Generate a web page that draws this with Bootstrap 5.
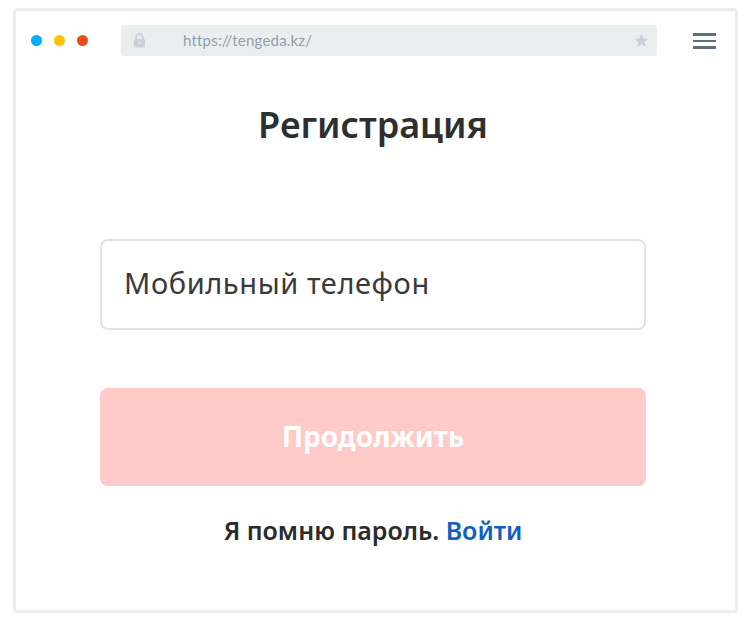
<!DOCTYPE html>
<html lang="ru">
<head>
<meta charset="utf-8">
<title>Регистрация</title>
<link href="https://cdn.jsdelivr.net/npm/bootstrap@5.3.0/dist/css/bootstrap.min.css" rel="stylesheet">
<style>
html,body{height:100%;background:#fff;font-family:"Noto Sans","Open Sans",sans-serif;}
.stage{padding:8px 13px 12px 13px;width:751px;height:625px;}
.frame{height:605px;width:725px;border:3px solid #ebeef0;border-radius:4px;background:#fff;}
.topbar{padding:14px 0 0 15px;height:45px;}
.dots{width:75px;gap:12px;height:31px;flex:none;}
.dot{width:11px;height:11px;border-radius:50%;}
.dot-a{background:#00aeff;}
.dot-b{background:#ffc107;}
.dot-c{background:#e84c1c;}
.addr{width:536px;height:31px;background:#ebeef0;border-radius:3px;padding:0 8px 0 12px;margin-left:15px;flex:none;}
.addr-url{font-size:15px;color:#8fa0ad;margin-left:37px;font-family:"Lato","Open Sans",sans-serif;letter-spacing:.2px;}
.burger{width:23px;margin-left:36px;gap:4px;flex:none;}
.burger span{height:2.5px;background:#5d6f80;display:block;}
.form-col{width:546px;margin-left:84px;}
.ttl{font-size:36px;font-weight:600;color:#2f2f2f;line-height:44px;margin:47px 0 92px;text-align:center;}
.phone{height:91px;border:2px solid #e2e2e2;border-radius:8px;font-size:29px;letter-spacing:.6px;color:#333;padding:0 22px 4px;box-shadow:none;}
.phone::placeholder{color:#3a3a3a;opacity:1;}
.go{height:98px;margin-top:58px;background:#ffcac7;border:0;border-radius:8px;color:#fff;font-size:28px;font-weight:700;padding-bottom:8px;}
.go:disabled{background:#ffcac7;color:#fff;opacity:1;}
.remind{font-size:25px;font-weight:600;color:#2b2b2b;text-align:center;margin-top:26px;line-height:36px;}
.remind a{color:#0f5fc4;text-decoration:none;}
</style>
</head>
<body class="m-0">
<div class="stage">
  <div class="frame d-flex flex-column">
    <div class="topbar d-flex align-items-start">
      <div class="dots d-flex align-items-center">
        <span class="dot dot-a"></span><span class="dot dot-b"></span><span class="dot dot-c"></span>
      </div>
      <div class="addr d-flex align-items-center">
        <svg width="13" height="15" viewBox="0 0 13 15" aria-hidden="true"><path d="M3 6.500V4.500a3.500 3.500 0 0 1 7 0v2" fill="none" stroke="#c9d2da" stroke-width="1.800"/><rect x="1" y="6" width="11" height="8.500" rx="1" fill="#c9d2da"/><circle cx="6.500" cy="10.200" r="1.100" fill="#ebeef0"/></svg>
        <span class="addr-url flex-grow-1">https://tengeda.kz/</span>
        <svg width="15" height="15" viewBox="0 0 24 24" aria-hidden="true"><path d="M12 1.500l3.200 7 7.600.9-5.600 5.200 1.500 7.500L12 18.300l-6.700 3.800 1.500-7.500L1.200 9.400l7.600-.9z" fill="#c9d2da"/></svg>
      </div>
      <div class="burger d-flex flex-column mt-2"><span></span><span></span><span></span></div>
    </div>
    <div class="form-col">
      <h1 class="ttl">Регистрация</h1>
      <input class="form-control phone" type="text" placeholder="Мобильный телефон">
      <button class="btn go w-100 d-block" type="button" disabled>Продолжить</button>
      <p class="remind mb-0">Я помню пароль. <a href="#">Войти</a></p>
    </div>
  </div>
</div>
<script src="https://cdn.jsdelivr.net/npm/bootstrap@5.3.0/dist/js/bootstrap.bundle.min.js"></script>
</body>
</html>
